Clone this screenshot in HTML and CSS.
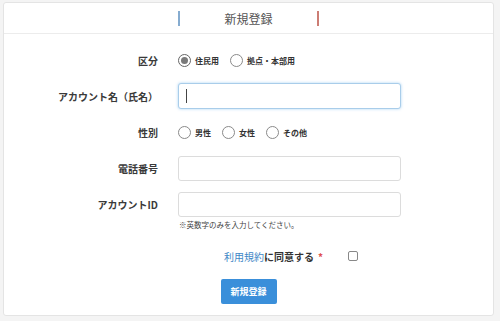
FILE: index.html
```html
<!DOCTYPE html>
<html lang="ja">
<head>
<meta charset="utf-8">
<title>新規登録</title>
<link rel="stylesheet" href="styles.css">
</head>
<body>
<div class="card">
  <div class="card-header">
    <span class="bar bar-blue"></span>
    <h1 class="title">新規登録</h1>
    <span class="bar bar-red"></span>
  </div>
  <form class="card-body">
    <div class="row">
      <div class="label">区分</div>
      <div class="field radios">
        <label class="radio"><span class="dot checked"></span><span class="rtext">住民用</span></label>
        <label class="radio"><span class="dot"></span><span class="rtext">拠点・本部用</span></label>
      </div>
    </div>
    <div class="row">
      <div class="label">アカウント名（氏名）</div>
      <div class="field">
        <span class="input-wrap">
          <input class="input focused" type="text">
          <span class="caret"></span>
        </span>
      </div>
    </div>
    <div class="row">
      <div class="label">性別</div>
      <div class="field radios">
        <label class="radio"><span class="dot"></span><span class="rtext">男性</span></label>
        <label class="radio"><span class="dot"></span><span class="rtext">女性</span></label>
        <label class="radio"><span class="dot"></span><span class="rtext">その他</span></label>
      </div>
    </div>
    <div class="row">
      <div class="label">電話番号</div>
      <div class="field"><input class="input" type="text"></div>
    </div>
    <div class="row">
      <div class="label">アカウントID</div>
      <div class="field"><input class="input" type="text"></div>
    </div>
    <div class="hint">※英数字のみを入力してください。</div>
    <div class="terms">
      <span class="terms-text"><a class="link" href="#">利用規約</a>に同意する<span class="req">*</span></span>
      <span class="checkbox"></span>
    </div>
    <div class="actions">
      <button class="btn" type="button">新規登録</button>
    </div>
  </form>
</div>
</body>
</html>
```

FILE: styles.css
```css
* { box-sizing: border-box; }
html, body { margin: 0; padding: 0; }
body {
  background: #f4f4f4;
  font-family: "Noto Sans CJK JP", "Noto Sans", "Liberation Sans", sans-serif;
  color: #333;
  padding: 2px 6px 0 3px;
}
.card {
  background: #fff;
  border: 1px solid #e4e4e4;
  border-radius: 3px;
  height: 314px;
}
.card-header {
  height: 31px;
  border-bottom: 1px solid #ececec;
  display: flex;
  align-items: center;
  justify-content: center;
}
.bar {
  width: 2px;
  height: 15px;
}
.bar-blue { background: #86acd0; }
.bar-red { background: #cc7d74; }
.title {
  margin: 0 44px;
  font-size: 12px;
  font-weight: normal;
  color: #555;
  line-height: 15px;
}
.card-body {
  padding-top: 13px;
}
.row {
  display: flex;
  align-items: center;
  height: 26px;
  margin-bottom: 10px;
}
.row:nth-child(5) { margin-bottom: 0; }
.label {
  width: 154px;
  text-align: right;
  font-size: 10px;
  font-weight: bold;
  color: #3a3a3a;
}
.field {
  margin-left: 20px;
  width: 223px;
}
.radios {
  display: flex;
  align-items: center;
}
.radio {
  display: flex;
  align-items: center;
  margin-right: 11px;
}
.dot {
  width: 13px;
  height: 13px;
  border: 1px solid #8a8a8a;
  border-radius: 50%;
  display: flex;
  align-items: center;
  justify-content: center;
  background: #fff;
}
.dot.checked { border-color: #666; }
.dot.checked::after {
  content: "";
  width: 7px;
  height: 7px;
  border-radius: 50%;
  background: #7a7a7a;
}
.rtext {
  margin-left: 4px;
  font-size: 8px;
  font-weight: bold;
  color: #333;
}
.input-wrap {
  position: relative;
  display: block;
}
.input {
  display: block;
  width: 223px;
  height: 25px;
  border: 1px solid #dcdcdc;
  border-radius: 3px;
  background: #fff;
  outline: none;
  font: inherit;
  padding: 0 6px;
}
.input.focused {
  height: 26px;
  border-color: #a9cdea;
  box-shadow: 0 0 3px rgba(102, 175, 233, 0.55);
}
.caret {
  position: absolute;
  left: 8px;
  top: 6px;
  width: 1px;
  height: 14px;
  background: #444;
}
.hint {
  margin-left: 175px;
  margin-top: 2px;
  font-size: 7.5px;
  line-height: 12px;
  color: #444;
}
.terms {
  display: flex;
  align-items: center;
  padding-left: 220px;
  margin-top: 18px;
  height: 14px;
}
.terms-text {
  font-size: 10px;
  font-weight: bold;
  color: #333;
}
.link {
  color: #3d86c6;
  text-decoration: none;
  font-weight: normal;
}
.req {
  color: #e05050;
  margin-left: 4px;
}
.checkbox {
  width: 10px;
  height: 10px;
  border: 1px solid #888;
  border-radius: 2px;
  margin-left: 25px;
  background: #fff;
}
.actions {
  display: flex;
  justify-content: center;
  margin-top: 16px;
}
.btn {
  width: 56px;
  height: 25px;
  border: none;
  border-radius: 2px;
  background: #3a8fda;
  color: #fff;
  font-family: inherit;
  font-size: 9px;
  font-weight: bold;
  padding: 0;
}
```
